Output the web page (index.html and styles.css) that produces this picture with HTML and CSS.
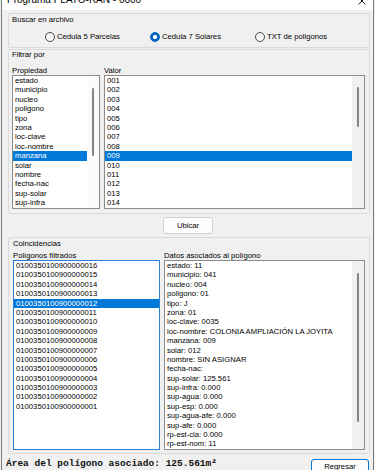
FILE: index.html
```html
<!DOCTYPE html>
<html lang="es">
<head>
  <meta charset="UTF-8">
  <title>Programa PLATO-RAN - 0000</title>
  <link rel="stylesheet" href="styles.css">
</head>
<body>
  <div class="window">
    <div class="titlebar">
      <span class="title">Programa PLATO-RAN - 0000</span>
      <svg class="close" width="8" height="8" viewBox="0 0 8 8">
        <path d="M0.5 0.5 L7.5 7.5 M7.5 0.5 L0.5 7.5" stroke="#222" stroke-width="1" fill="none"/>
      </svg>
    </div>

    <div class="content">
      <div class="group g-buscar">
        <div class="caption">Buscar en archivo</div>
        <div class="radios">
          <label class="radio"><span class="dot"></span>Cedula 5 Parcelas</label>
          <label class="radio"><span class="dot checked"></span>Cedula 7 Solares</label>
          <label class="radio"><span class="dot"></span>TXT de poligonos</label>
        </div>
      </div>

      <div class="group g-filtrar">
        <div class="caption">Filtrar por</div>
        <div class="cols cols-filtrar">
          <div class="col">
            <div class="field-label">Propiedad</div>
            <div class="listbox">
              <ul class="items">
                <li>estado</li>
                <li>municipio</li>
                <li>nucleo</li>
                <li>poligono</li>
                <li>tipo</li>
                <li>zona</li>
                <li>loc-clave</li>
                <li>loc-nombre</li>
                <li class="sel">manzana</li>
                <li>solar</li>
                <li>nombre</li>
                <li>fecha-nac</li>
                <li>sup-solar</li>
                <li>sup-infra</li>
              </ul>
              <div class="scroll white"><div class="thumb t-prop"></div></div>
            </div>
          </div>
          <div class="col">
            <div class="field-label">Valor</div>
            <div class="listbox">
              <ul class="items">
                <li>001</li>
                <li>002</li>
                <li>003</li>
                <li>004</li>
                <li>005</li>
                <li>006</li>
                <li>007</li>
                <li>008</li>
                <li class="sel">009</li>
                <li>010</li>
                <li>011</li>
                <li>012</li>
                <li>013</li>
                <li>014</li>
              </ul>
              <div class="scroll"><div class="thumb t-valor"></div></div>
            </div>
          </div>
        </div>
      </div>

      <div class="actions">
        <button class="btn btn-ubicar">Ubicar</button>
      </div>

      <div class="group g-coinc">
        <div class="caption">Coincidencias</div>
        <div class="cols cols-coinc">
          <div class="col">
            <div class="field-label">Polígonos filtrados</div>
            <div class="listbox tall focused">
              <ul class="items">
                <li>0100350100900000016</li>
                <li>0100350100900000015</li>
                <li>0100350100900000014</li>
                <li>0100350100900000013</li>
                <li class="sel">0100350100900000012</li>
                <li>0100350100900000011</li>
                <li>0100350100900000010</li>
                <li>0100350100900000009</li>
                <li>0100350100900000008</li>
                <li>0100350100900000007</li>
                <li>0100350100900000006</li>
                <li>0100350100900000005</li>
                <li>0100350100900000004</li>
                <li>0100350100900000003</li>
                <li>0100350100900000002</li>
                <li>0100350100900000001</li>
              </ul>
            </div>
          </div>
          <div class="col">
            <div class="field-label">Datos asociados al polígono</div>
            <div class="listbox tall">
              <ul class="items">
                <li>estado: 11</li>
                <li>municipio: 041</li>
                <li>nucleo: 004</li>
                <li>poligono: 01</li>
                <li>tipo: J</li>
                <li>zona: 01</li>
                <li>loc-clave: 0035</li>
                <li>loc-nombre: COLONIA AMPLIACIÓN LA JOYITA</li>
                <li>manzana: 009</li>
                <li>solar: 012</li>
                <li>nombre: SIN ASIGNAR</li>
                <li>fecha-nac:</li>
                <li>sup-solar: 125.561</li>
                <li>sup-infra: 0.000</li>
                <li>sup-agua: 0.000</li>
                <li>sup-esp: 0.000</li>
                <li>sup-agua-afe: 0.000</li>
                <li>sup-afe: 0.000</li>
                <li>rp-est-cla: 0.000</li>
                <li>rp-est-nom: 11</li>
              </ul>
              <div class="scroll"><div class="thumb t-datos"></div></div>
            </div>
          </div>
        </div>
      </div>

      <div class="footer">
        <span class="area">Área del polígono asociado: 125.561m²</span>
        <button class="btn btn-regresar">Regresar</button>
      </div>
    </div>
  </div>
</body>
</html>
```

FILE: styles.css
```css
*, *::before, *::after {
    box-sizing: border-box;
}
html, body {
    margin: 0;
    height: 470px;
    overflow: hidden;
    background: #f0f0f0;
}
body {
    font-family: "Liberation Sans", Arial, sans-serif;
    font-size: 7.7px;
    color: #000;
}
.window {
    margin: 0 1px;
    height: 470px;
    border-left: 1px solid #7a7a7a;
    border-right: 1px solid #7a7a7a;
    background: #f0f0f0;
}
.titlebar {
    height: 10px;
    background: #fff;
    overflow: hidden;
    display: flex;
    justify-content: space-between;
    align-items: flex-start;
    padding: 0 7px 0 5px;
}
.title {
    display: block;
    font-size: 10px;
    line-height: 10px;
    margin-top: -5px;
}
.close {
    margin-top: -3px;
}
.content {
    padding: 3px 3px 0 6px;
}
.group {
    border: 1px solid #dadada;
    border-radius: 2px;
}
.caption {
    line-height: 10px;
}
.g-buscar {
    height: 35px;
    padding: 1px 3px 0;
}
.radios {
    display: grid;
    grid-template-columns: repeat(3, 105px);
    margin: 7px 0 0 33px;
}
.radio {
    display: flex;
    align-items: center;
    gap: 2px;
    height: 10px;
    line-height: 10px;
    white-space: nowrap;
}
.dot {
    width: 10px;
    height: 10px;
    border-radius: 50%;
    border: 1px solid #4a4a4a;
    background: #f7f7f7;
    flex: none;
}
.dot.checked {
    border-color: #0067c0;
    background: radial-gradient(circle, #fff 0 1.8px, #0067c0 2.4px);
}
.g-filtrar {
    margin-top: 1px;
    height: 165px;
    padding: 0 4px 0 3px;
}
.cols {
    display: grid;
    column-gap: 4px;
}
.cols-filtrar {
    grid-template-columns: 88px 1fr;
    margin-top: 7px;
}
.field-label {
    height: 8px;
    line-height: 8px;
    white-space: nowrap;
}
.listbox {
    height: 134px;
    border: 1px solid #8c8c8c;
    background: #fff;
    display: flex;
    overflow: hidden;
}
.listbox.tall {
    height: 190px;
}
.listbox.focused {
    border-color: #2a7fd4;
}
.items {
    flex: 1;
    min-width: 0;
    list-style: none;
    margin: 0;
    padding: 0;
    overflow: hidden;
}
.items li {
    height: 9.4px;
    line-height: 9.4px;
    padding-left: 2px;
    white-space: nowrap;
}
.items li.sel {
    background: #0078d7;
    color: #fff;
}
.scroll {
    width: 12px;
    flex: none;
    background: #f0f0f0;
}
.scroll.white {
    background: #fbfbfb;
}
.thumb {
    width: 2px;
    margin: 11px auto 0;
    background: #858585;
    border-radius: 1px;
}
.t-prop {
    margin-top: 12px;
    height: 68px;
}
.t-valor {
    height: 40px;
}
.t-datos {
    margin-top: 12px;
    height: 149px;
}
.actions {
    display: flex;
    justify-content: center;
    margin: 3px 0 3px -2px;
}
.btn {
    font: inherit;
    color: #000;
    padding: 0;
    background: #fdfdfd;
    border: 1px solid #d0d0d0;
    border-radius: 3px;
}
.btn-ubicar {
    width: 50px;
    height: 17px;
}
.g-coinc {
    height: 217px;
    padding: 0 4px;
}
.g-coinc .caption {
    line-height: 9px;
    margin-top: 1px;
}
.cols-coinc {
    grid-template-columns: 147px 1fr;
    margin-top: 4px;
}
.footer {
    display: flex;
    justify-content: space-between;
    align-items: flex-start;
    padding: 0 1px 0 0;
    margin-left: -2px;
}
.area {
    font-family: "Liberation Mono", "Courier New", monospace;
    font-size: 9.5px;
    font-weight: bold;
    line-height: 10px;
    margin-top: 5px;
    color: #111;
}
.btn-regresar {
    width: 58px;
    height: 15px;
    margin-top: 5px;
    border-color: #0078d7;
}
```
